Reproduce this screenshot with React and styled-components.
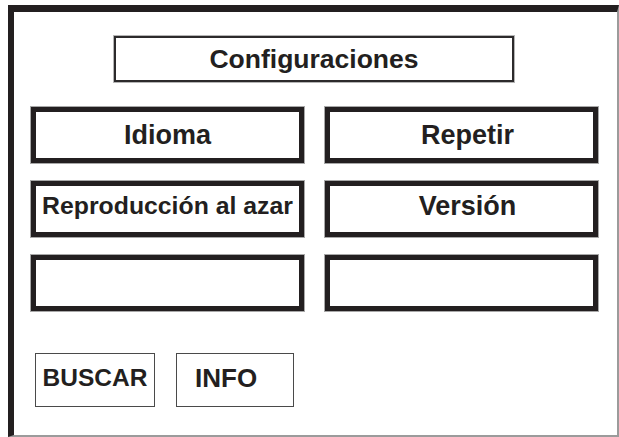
import React from "react";
import styled, { createGlobalStyle } from "styled-components";

const Global = createGlobalStyle`
  html, body { margin: 0; padding: 0; background: #ffffff; }
  body { font-family: "Liberation Sans", Arial, Helvetica, sans-serif; }
`;

const Frame = styled.div`
  box-sizing: border-box;
  margin: 5px 0 0 8px;
  width: 611px;
  height: 432px;
  border-top: 7px solid #231f20;
  border-left: 6px solid #231f20;
  border-right: 2px solid #9b9b9b;
  border-bottom: 2px solid #9b9b9b;
  display: flex;
  flex-direction: column;
  background: #fff;
`;

const Title = styled.div`
  box-sizing: border-box;
  margin: 24px 0 0 100px;
  width: 400px;
  height: 46px;
  border: 2px solid #2c2a2b;
  box-shadow: 0 0 0 1px #b5b5b5;
  display: flex;
  align-items: center;
  justify-content: center;
  font-size: 26.5px;
  font-weight: bold;
  color: #231f20;
`;

const Grid = styled.div`
  margin: 25px 0 0 17px;
  display: grid;
  grid-template-columns: 273px 273px;
  grid-auto-rows: 56px;
  column-gap: 21px;
  row-gap: 18px;
`;

const Tile = styled.div`
  box-sizing: border-box;
  border: 5px solid #231f20;
  box-shadow: 0 0 0 1px #a8a8a8;
  display: flex;
  align-items: center;
  justify-content: center;
  padding-left: ${(p) => p.$shift || 0}px;
  padding-bottom: ${(p) => p.$lift || 0}px;
  font-size: ${(p) => p.$size || 27}px;
  font-weight: bold;
  color: #231f20;
  white-space: nowrap;
`;

const Actions = styled.div`
  margin: 42px 0 0 21px;
  display: flex;
  gap: 21px;
`;

const ActionButton = styled.div`
  box-sizing: border-box;
  width: ${(p) => p.$w}px;
  height: 54px;
  border: 1px solid #4a4a4a;
  display: flex;
  align-items: center;
  justify-content: ${(p) => (p.$left ? "flex-start" : "center")};
  padding-left: ${(p) => p.$pad || 0}px;
  padding-bottom: 4px;
  font-size: ${(p) => p.$size || 26}px;
  font-weight: bold;
  color: #231f20;
  white-space: nowrap;
`;

export default function App() {
  return (
    <>
      <Global />
      <Frame>
        <Title>Configuraciones</Title>
        <Grid>
          <Tile>Idioma</Tile>
          <Tile $shift={12}>Repetir</Tile>
          <Tile $size={24.8} $lift={6}>Reproducción al azar</Tile>
          <Tile $shift={12} $lift={6}>Versión</Tile>
          <Tile />
          <Tile />
        </Grid>
        <Actions>
          <ActionButton $w={120} $size={24.5}>BUSCAR</ActionButton>
          <ActionButton $w={118} $left $pad={18}>INFO</ActionButton>
        </Actions>
      </Frame>
    </>
  );
}
